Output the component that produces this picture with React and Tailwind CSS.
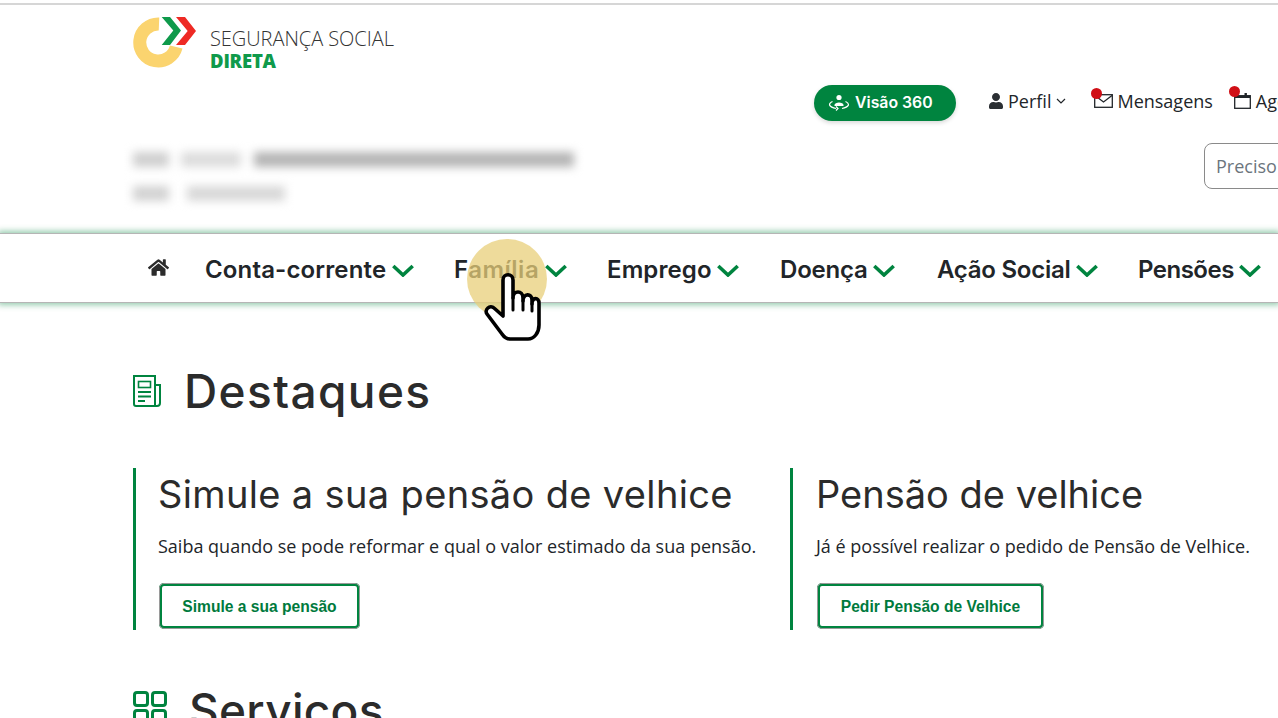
import React from "react";
import { FaHome, FaUser } from "react-icons/fa";

const pop = "font-['Inter','Liberation_Sans',sans-serif]";
const open = "font-['Open_Sans','Liberation_Sans',sans-serif]";

function Logo() {
  return (
    <svg width="66" height="54" viewBox="0 0 66 54" className="shrink-0">
      <path d="M26 8 A18.5 18.5 0 1 0 43.2 31" fill="none" stroke="#fbd46f" strokeWidth="13" />
      <path d="M28.7 1 H37 L48 14.5 L37 29 H28.7 L40.3 14.5Z" fill="#0f9a4b" />
      <path d="M43 1 H52 L63 15 L52 29 H43 L54.7 15Z" fill="#ee2a24" />
    </svg>
  );
}

function Chevron() {
  return (
    <svg width="22" height="13" viewBox="0 0 22 13" className="shrink-0">
      <path d="M1.3 2 L11 11 L20.7 2" fill="none" stroke="#00843f" strokeWidth="3.6" />
    </svg>
  );
}

function NavItem({ label, className, labelClass }) {
  return (
    <div className={"flex items-center gap-[6px] " + className}>
      <span className={"text-[24px] leading-[30px] font-semibold text-[#212529] whitespace-nowrap " + labelClass}>{label}</span>
      <Chevron />
    </div>
  );
}

function Card({ title, text, button, className, btnClass, titleClass }) {
  return (
    <div className={"border-l-[3px] border-[#00843f] h-[162px] shrink-0 " + className}>
      <h2 className={pop + " text-[38px] leading-[52px] font-normal text-[#2b2b2b] whitespace-nowrap " + titleClass}>{title}</h2>
      <p className={open + " mt-[14px] text-[18px] leading-[24px] text-[#212529] whitespace-nowrap"}>{text}</p>
      <button className={"mt-[25px] ml-px h-[46px] pt-[1px] flex items-center justify-center rounded-[5px] border-[3px] border-[#00843f] outline outline-1 outline-[#9a9a9a] -outline-offset-1 bg-white font-['Liberation_Sans',sans-serif] font-bold text-[15.6px] text-[#007a3d] " + btnClass}>
        {button}
      </button>
    </div>
  );
}

export default function App() {
  return (
    <div className="relative w-[1278px] h-[718px] overflow-hidden bg-white">
      <div className="h-[5px] border-t-[2px] mt-[3px] border-[#d6d6d6]" />

      <div className="pl-[133px] pt-[8px] flex items-start">
        <Logo />
        <div className="ml-[11px] pt-[10px] font-['Open_Sans',sans-serif]">
          <div className="text-[20px] leading-[26px] font-light tracking-[-0.05px] text-[#333] whitespace-nowrap">SEGURANÇA SOCIAL</div>
          <div className="text-[18.5px] leading-[17px] font-extrabold tracking-[-0.2px] text-[#0f9a4b]">DIRETA</div>
        </div>
      </div>

      <div className={"mt-[15px] pl-[814px] h-[36px] flex items-center whitespace-nowrap " + open}>
        <div className={"w-[142px] h-[36px] pl-[14px] rounded-full bg-[#00843f] shadow-[0_2px_4px_rgba(0,0,0,0.15)] flex items-center gap-[5px] text-white text-[15.8px] font-semibold shrink-0 " + pop}>
          <svg width="22" height="18" viewBox="0 0 22 18">
            <circle cx="11" cy="3.5" r="2.6" fill="#fff" />
            <path d="M6.5 11 C6.5 7.5 15.5 7.5 15.5 11 V12 H6.5Z" fill="#fff" />
            <path d="M4.5 7.5 C-0.5 10 1 13 8 14.5 M17.5 7.5 C22.5 10 21 13 14 14.5" fill="none" stroke="#fff" strokeWidth="1.2" />
            <path d="M8 12.5 L10 14.5 L8 16.5" fill="none" stroke="#fff" strokeWidth="1.2" />
          </svg>
          Visão 360
        </div>
        <div className="ml-[32px] -mt-[4px] flex items-center text-[18px] text-[#212529] shrink-0">
          <FaUser className="text-[16px] text-[#2b2f33]" />
          <span className="ml-[4px]">Perfil</span>
          <svg width="10" height="6" viewBox="0 0 10 6" className="ml-[5px]"><path d="M1 1 L5 5 L9 1" fill="none" stroke="#212529" strokeWidth="1.2" /></svg>
        </div>
        <div className="ml-[28px] -mt-[4px] flex items-center text-[18px] text-[#212529] shrink-0">
          <span className="relative w-[19px] h-[14px] block">
            <svg width="19" height="14" viewBox="0 0 19 14" className="block">
              <rect x="0.7" y="0.7" width="17.6" height="12.6" fill="none" stroke="#212529" strokeWidth="1.3" />
              <path d="M1 1.5 L9.5 8 L18 1.5" fill="none" stroke="#212529" strokeWidth="1.3" />
            </svg>
            <span className="absolute -left-[3px] -top-[6px] w-[11px] h-[11px] rounded-full bg-[#d00f16]" />
          </span>
          <span className="ml-[4px]">Mensagens</span>
        </div>
        <div className="ml-[21px] -mt-[4px] flex items-center text-[18px] text-[#212529] shrink-0">
          <span className="relative w-[17px] h-[16px] block">
            <svg width="17" height="16" viewBox="0 0 17 16" className="block">
              <rect x="0.7" y="2.7" width="15.6" height="12.6" fill="none" stroke="#212529" strokeWidth="1.3" />
              <rect x="10.5" y="0" width="2.4" height="5" fill="#212529" />
              <rect x="1" y="3" width="15" height="2" fill="#212529" />
            </svg>
            <span className="absolute -left-[5px] -top-[7px] w-[11px] h-[11px] rounded-full bg-[#d00f16]" />
          </span>
          <span className="ml-[5px]">Agenda</span>
        </div>
      </div>

      <div className="mt-[22px] pl-[133px] h-[46px] flex items-start">
        <div className="w-[445px] shrink-0 blur-[5px]">
          <div className="mt-[9px] flex gap-[12px] h-[15px]">
            <div className="w-[36px] bg-[#cfcfcf]" />
            <div className="w-[60px] bg-[#dcdcdc]" />
            <div className="w-[320px] ml-[1px] bg-[#b4b4b4]" />
          </div>
          <div className="mt-[19px] flex gap-[18px] h-[15px]">
            <div className="w-[36px] bg-[#d2d2d2]" />
            <div className="w-[98px] bg-[#d8d8d8]" />
          </div>
        </div>
        <div className={"ml-[626px] w-[200px] h-[46px] shrink-0 rounded-[8px] border border-[#8a8a8a] px-[11px] flex items-center text-[18px] text-[#6c757d] whitespace-nowrap " + open}>
          Preciso de ajuda
        </div>
      </div>

      <nav className={"mt-[44px] h-[70px] pt-[4px] border-y border-[#b5b5b5] shadow-[0_0_6px_2px_rgba(0,132,63,0.42)] bg-white pl-[148px] flex items-center whitespace-nowrap " + pop}>
        <FaHome className="text-[21px] text-[#2b2b2b] shrink-0 -mt-[6px]" />
        <NavItem label="Conta-corrente" className="ml-[36px]" labelClass="w-[181px] tracking-[0.15px]" />
        <NavItem label="Família" className="ml-[40px]" labelClass="w-[85px] tracking-[0.5px]" />
        <NavItem label="Emprego" className="ml-[40px]" labelClass="w-[104px] tracking-[0.1px]" />
        <NavItem label="Doença" className="ml-[41px]" labelClass="w-[87px] tracking-[-0.2px]" />
        <NavItem label="Ação Social" className="ml-[42px]" labelClass="w-[133px] tracking-[-0.25px]" />
        <NavItem label="Pensões" className="ml-[40px]" labelClass="w-[95px] tracking-[-0.5px]" />
      </nav>

      <div className="pl-[133px] mt-[56px] flex items-center h-[64px]">
        <svg width="28" height="32" viewBox="0 0 28 32" className="shrink-0">
          <path d="M1 1 H22 V31 H3 Q1 31 1 29Z" fill="none" stroke="#00843f" strokeWidth="2" />
          <path d="M22 10 H27 V28 Q27 31 24 31 H20" fill="none" stroke="#00843f" strokeWidth="2" />
          <rect x="5.5" y="6.5" width="12" height="6" fill="none" stroke="#00843f" strokeWidth="1.6" />
          <path d="M5 17 H18 M5 21.5 H18 M5 26 H12" stroke="#00843f" strokeWidth="1.8" />
        </svg>
        <h1 className={pop + " ml-[23px] text-[46px] leading-[64px] tracking-[1.4px] font-medium text-[#2b2b2b]"}>Destaques</h1>
      </div>

      <div className="pl-[133px] mt-[45px] flex">
        <Card
          title="Simule a sua pensão de velhice"
          text="Saiba quando se pode reformar e qual o valor estimado da sua pensão."
          button="Simule a sua pensão"
          className="w-[657px] pl-[22px]"
          btnClass="w-[201px]"
          titleClass="tracking-[0.35px]"
        />
        <Card
          title="Pensão de velhice"
          text="Já é possível realizar o pedido de Pensão de Velhice."
          button="Pedir Pensão de Velhice"
          className="w-[480px] pl-[23px]"
          btnClass="w-[227px]"
          titleClass="tracking-[0px]"
        />
      </div>

      <div className="pl-[133px] mt-[48px] flex items-start">
        <svg width="34" height="34" viewBox="0 0 34 34" className="shrink-0 mt-[13px]">
          <rect x="1.5" y="1.5" width="13" height="13" rx="2.5" fill="none" stroke="#00843f" strokeWidth="3" />
          <rect x="19.5" y="1.5" width="13" height="13" rx="2.5" fill="none" stroke="#00843f" strokeWidth="3" />
          <rect x="1.5" y="19.5" width="13" height="13" rx="2.5" fill="none" stroke="#00843f" strokeWidth="3" />
          <rect x="19.5" y="19.5" width="13" height="13" rx="2.5" fill="none" stroke="#00843f" strokeWidth="3" />
        </svg>
        <h1 className={pop + " ml-[22px] text-[46px] leading-[64px] tracking-[0.3px] font-medium text-[#2b2b2b]"}>Serviços</h1>
      </div>

      <div className="absolute left-[467px] top-[239px] w-[80px] h-[80px] rounded-full bg-[#e8cf7a] opacity-75" />
      <svg width="66" height="76" viewBox="0 0 66 76" className="absolute left-[480px] top-[270px]">
        <path d="M23 46 L23 10 C23 3 33 3 33 10 L33 28 C33 20 43 20 43 28 L43 31 C43 23 52 23 52 30 L52 34 C52 27 59 27 59 33 L59 55 C59 63 54 69 48 69 L30 69 C26 69 24 67 22 64 L7 44 C4 40 10 34 14 38 L23 46Z"
          fill="#fff" stroke="#000" strokeWidth="3.6" strokeLinejoin="round" />
        <path d="M33 28 V40 M43 31 V40 M52 34 V41" fill="none" stroke="#000" strokeWidth="3" strokeLinecap="round" />
      </svg>
    </div>
  );
}
